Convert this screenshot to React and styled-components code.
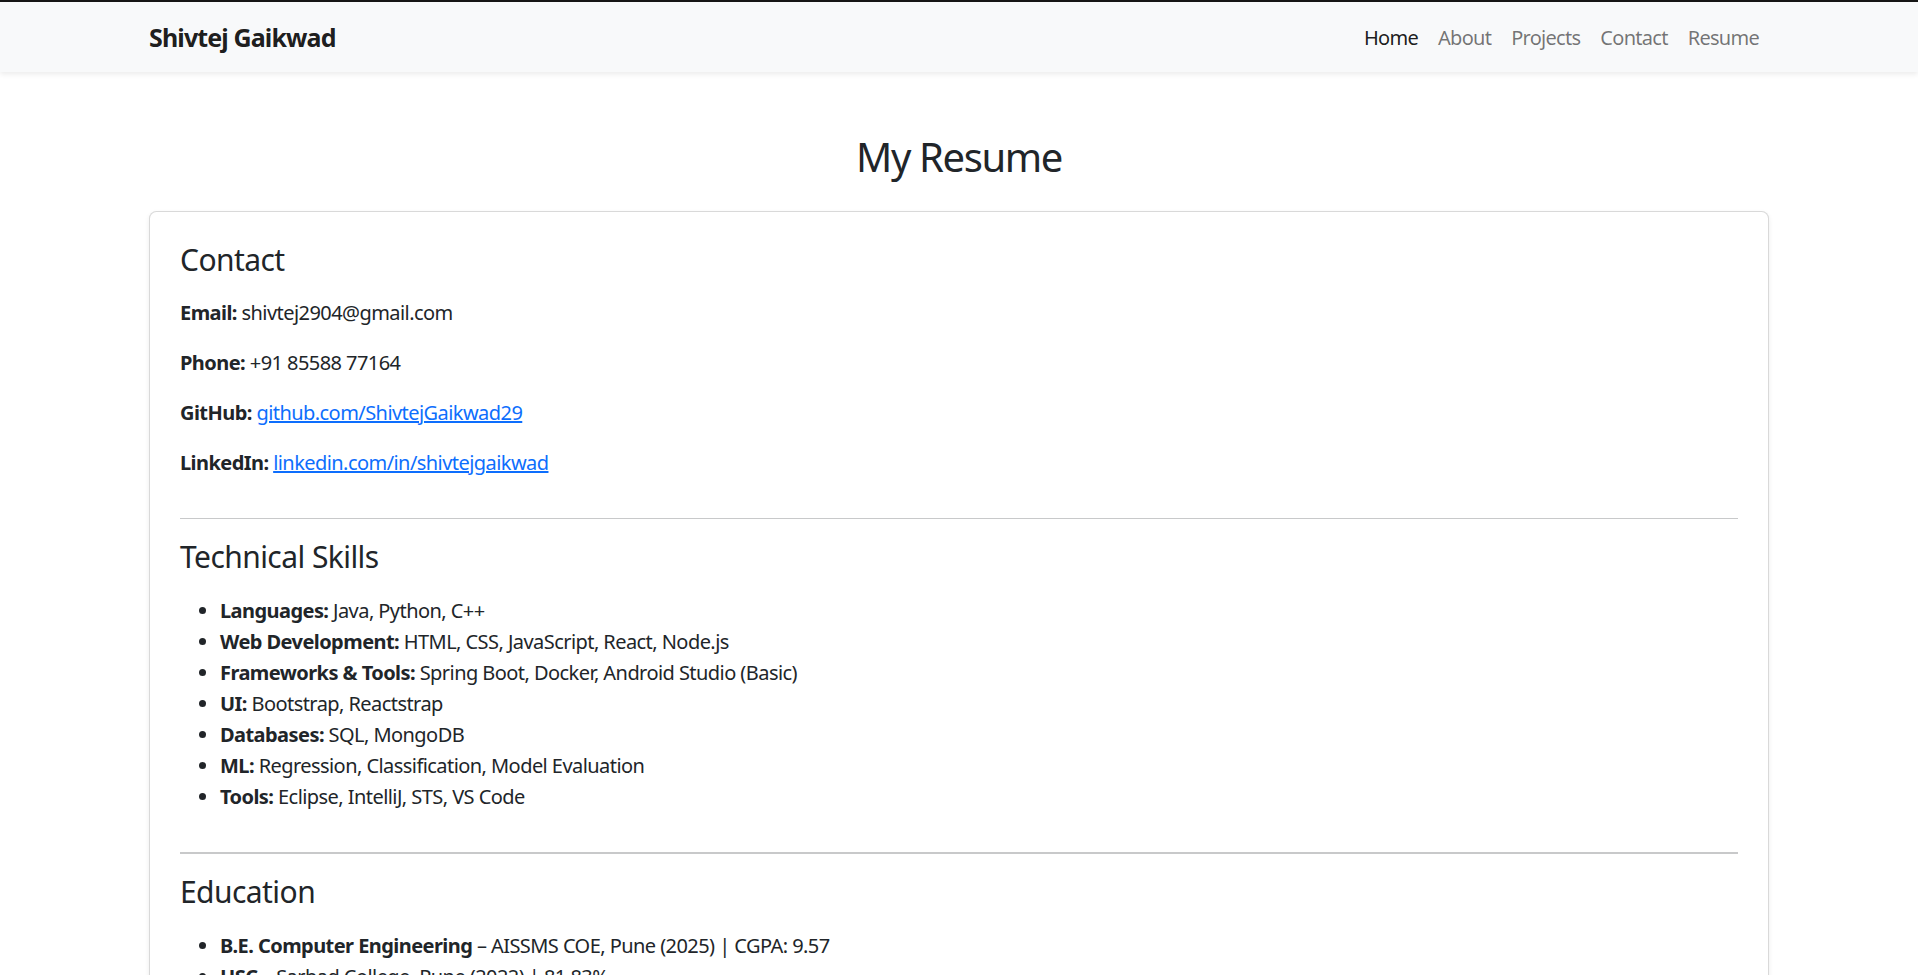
import styled, { createGlobalStyle } from "styled-components";

const GlobalStyle = createGlobalStyle`
  *, *::before, *::after {
    box-sizing: border-box;
  }
  body {
    margin: 0;
    font-family: "Noto Sans", "Open Sans", Arial, sans-serif;
    font-size: 20px;
    line-height: 1.5;
    letter-spacing: -0.028em;
    color: #212529;
    background: #ffffff;
  }
`;

const WindowEdge = styled.div`
  height: 2px;
  background: #161616;
`;

const Navbar = styled.nav`
  background: #f8f9fa;
  padding: 10px 0;
  box-shadow: 0 2.5px 5px rgba(0, 0, 0, 0.075);
`;

const NavInner = styled.div`
  max-width: 1650px;
  margin: 0 auto;
  padding: 0 15px;
  display: flex;
  align-items: center;
  justify-content: space-between;
`;

const Brand = styled.a`
  font-size: 25px;
  font-weight: 700;
  line-height: 37px;
  letter-spacing: -0.035em;
  padding-top: 1px;
  color: rgba(0, 0, 0, 0.9);
  text-decoration: none;
`;

const NavList = styled.ul`
  display: flex;
  list-style: none;
  margin: 0;
  padding: 0;
`;

const NavLink = styled.a`
  display: block;
  padding: 11px 10px 9px;
  font-size: 20px;
  line-height: 30px;
  letter-spacing: -0.036em;
  text-decoration: none;
  color: ${(p) => (p.$active ? "rgba(0, 0, 0, 0.9)" : "rgba(0, 0, 0, 0.55)")};
`;

const Main = styled.main`
  max-width: 1650px;
  margin: 61px auto;
  padding: 0 15px;
`;

const PageTitle = styled.h2`
  margin: 0 0 30px;
  text-align: center;
  font-size: 40px;
  font-weight: 400;
  line-height: 48px;
  letter-spacing: -0.035em;
`;

const Card = styled.div`
  display: flex;
  flex-direction: column;
  border: 1.25px solid rgba(0, 0, 0, 0.15);
  border-radius: 7.5px;
  box-shadow: 0 2.5px 5px rgba(0, 0, 0, 0.075);
  padding: 30px;
  background: #fff;
`;

const SectionTitle = styled.h4`
  margin: 0 0 20px;
  font-size: 30px;
  font-weight: 400;
  line-height: 36px;
`;

const Info = styled.p`
  margin: 0 0 20px;
`;

const Label = styled.strong`
  font-weight: 700;
`;

const Link = styled.a`
  color: #0d6efd;
  text-decoration: underline;
`;

const Divider = styled.hr`
  width: 100%;
  margin: 20px 0;
  border: 0;
  border-top: ${(p) => p.$weight || 1}px solid #c8c9ca;
`;

const List = styled.ul`
  margin: 0 0 20px;
  padding-left: 40px;

  li {
    line-height: 31px;
  }
`;

const navItems = ["Home", "About", "Projects", "Contact", "Resume"];

const contact = [
  { label: "Email:", text: "shivtej2904@gmail.com" },
  { label: "Phone:", text: "+91 85588 77164" },
  { label: "GitHub:", link: "github.com/ShivtejGaikwad29" },
  { label: "LinkedIn:", link: "linkedin.com/in/shivtejgaikwad" },
];

const skills = [
  ["Languages:", "Java, Python, C++"],
  ["Web Development:", "HTML, CSS, JavaScript, React, Node.js"],
  ["Frameworks & Tools:", "Spring Boot, Docker, Android Studio (Basic)"],
  ["UI:", "Bootstrap, Reactstrap"],
  ["Databases:", "SQL, MongoDB"],
  ["ML:", "Regression, Classification, Model Evaluation"],
  ["Tools:", "Eclipse, IntelliJ, STS, VS Code"],
];

const education = [
  ["B.E. Computer Engineering", "– AISSMS COE, Pune (2025) | CGPA: 9.57"],
  ["HSC", "– Sarhad College, Pune (2022) | 81.83%"],
];

export default function App() {
  return (
    <>
      <GlobalStyle />
      <WindowEdge />
      <Navbar>
        <NavInner>
          <Brand href="#">Shivtej Gaikwad</Brand>
          <NavList>
            {navItems.map((item) => (
              <li key={item}>
                <NavLink href="#" $active={item === "Home"}>
                  {item}
                </NavLink>
              </li>
            ))}
          </NavList>
        </NavInner>
      </Navbar>

      <Main>
        <PageTitle>My Resume</PageTitle>
        <Card>
          <SectionTitle>Contact</SectionTitle>
          {contact.map((c) => (
            <Info key={c.label}>
              <Label>{c.label}</Label>{" "}
              {c.link ? <Link href="#">{c.link}</Link> : c.text}
            </Info>
          ))}

          <Divider />

          <SectionTitle>Technical Skills</SectionTitle>
          <List>
            {skills.map(([label, text]) => (
              <li key={label}>
                <Label>{label}</Label> {text}
              </li>
            ))}
          </List>

          <Divider $weight={2} />

          <SectionTitle>Education</SectionTitle>
          <List>
            {education.map(([label, text]) => (
              <li key={label}>
                <Label>{label}</Label> {text}
              </li>
            ))}
          </List>
        </Card>
      </Main>
    </>
  );
}
